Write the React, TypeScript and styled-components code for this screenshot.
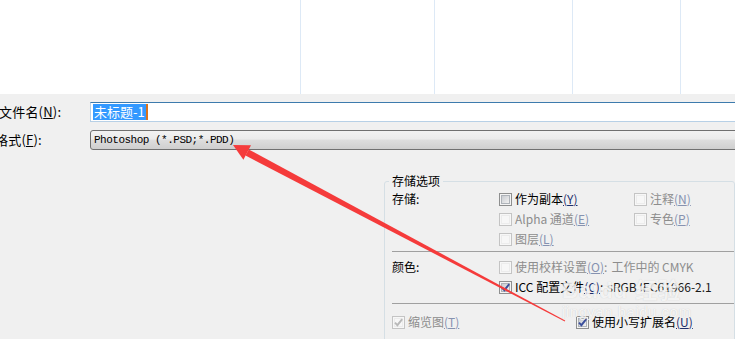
import React from "react";
import styled, { createGlobalStyle } from "styled-components";

const Global = createGlobalStyle`
  html, body { margin: 0; padding: 0; background: #f0f0f0; }
  body { font-family: "Noto Sans CJK SC", "Noto Sans", sans-serif; }
`;

const Screen = styled.div`
  position: relative;
  width: 735px;
  height: 339px;
  overflow: hidden;
  background: #f0f0f0;
`;

const FileList = styled.div`
  height: 94px;
  background: #ffffff;
  display: flex;
`;

const ListColumn = styled.div<{ $w?: number }>`
  flex: ${(p) => (p.$w ? `0 0 ${p.$w}px` : "1 1 auto")};
  box-sizing: border-box;
  border-right: ${(p) => (p.$w ? "1px solid #dde9f6" : "none")};
`;

const Form = styled.div`
  display: grid;
  grid-template-columns: 90px 1fr;
  grid-auto-rows: 20px;
  row-gap: 8px;
  align-items: center;
  padding-top: 8px;
  margin-right: -12px;
`;

const FieldLabel = styled.label<{ $shift: number }>`
  margin-left: ${(p) => p.$shift}px;
  font-size: 13px;
  line-height: 20px;
  color: #000;
  white-space: nowrap;
  letter-spacing: 0.2px;
`;

const Key = styled.span<{ $tone?: "dark" | "muted" | "plain" }>`
  text-decoration: underline;
  text-underline-offset: 1px;
  color: ${(p) =>
    p.$tone === "dark" ? "#1f2f6c" : p.$tone === "muted" ? "#8692b0" : "inherit"};
`;

const TextInput = styled.div`
  height: 20px;
  box-sizing: border-box;
  border: 1px solid #b7d0e6;
  border-top-color: #3d7bad;
  background: #fff;
  display: flex;
  align-items: center;
  padding-left: 2px;
`;

const Selected = styled.span`
  background: #3399ff;
  color: #fff;
  font-size: 13px;
  line-height: 16px;
  height: 16px;
  padding: 0 1px;
`;

const Caret = styled.span`
  width: 2px;
  height: 16px;
  background: #d8721c;
`;

const Combo = styled.div`
  height: 20px;
  box-sizing: border-box;
  border: 1px solid #707070;
  border-radius: 3px 0 0 3px;
  background: linear-gradient(#f2f2f2 0%, #ebebeb 45%, #dddddd 50%, #cfcfcf 100%);
  padding-left: 3px;
  font-family: "Liberation Mono", monospace;
  font-size: 11px;
  letter-spacing: -0.5px;
  line-height: 18px;
  color: #000;
  white-space: nowrap;
`;

const OptionsArea = styled.div`
  padding: 23px 0 0 384px;
`;

const GroupBox = styled.fieldset`
  margin: 0;
  width: 351px;
  box-sizing: border-box;
  min-width: 0;
  border: 1px solid #d5dfe5;
  border-radius: 3px;
  padding: 0 7px 40px 7px;
  height: 220px;
`;

const GroupTitle = styled.legend`
  padding: 0 3px;
  margin-left: -3px;
  font-size: 12px;
  line-height: 16px;
  color: #000;
`;

const Section = styled.div<{ $cols: string }>`
  display: grid;
  grid-template-columns: ${(p) => p.$cols};
  grid-auto-rows: 20px;
  align-items: center;
`;

const SectionLabel = styled.span<{ $rows?: number }>`
  grid-row: span ${(p) => p.$rows ?? 1};
  align-self: start;
  font-size: 12px;
  line-height: 20px;
  color: #000;
`;

const Separator = styled.div<{ $above: number; $below: number }>`
  height: 1px;
  background: #a0a0a0;
  margin: ${(p) => p.$above}px -7px ${(p) => p.$below}px 0;
`;

const Item = styled.span<{ $col?: number }>`
  grid-column: ${(p) => p.$col ?? "auto"};
  display: inline-flex;
  align-items: center;
  gap: 3px;
  white-space: nowrap;
`;

const ItemText = styled.span<{ $disabled?: boolean }>`
  font-size: 12px;
  line-height: 16px;
  color: ${(p) => (p.$disabled ? "#8d8d8d" : "#000")};
`;

const ValueText = styled.span<{ $disabled?: boolean }>`
  margin-left: 4px;
  color: ${(p) => (p.$disabled ? "#8d8d8d" : "#1a1a1a")};
`;

const Box = styled.span<{ $disabled?: boolean }>`
  position: relative;
  flex: none;
  width: 13px;
  height: 13px;
  box-sizing: border-box;
  border: 1px solid ${(p) => (p.$disabled ? "#c4c4c4" : "#8e8f8f")};
  background: ${(p) => (p.$disabled ? "#f7f7f7" : "#f4f4f4")};
  &::before {
    content: "";
    position: absolute;
    inset: 1px;
    border: 1px solid ${(p) => (p.$disabled ? "#ececec" : "#aeb3b9")};
    background: ${(p) =>
      p.$disabled ? "#f7f7f7" : "linear-gradient(135deg, #c9ccd1 0%, #f1f1f1 100%)"};
  }
  svg {
    position: absolute;
    left: -1px;
    top: -1px;
  }
`;

const Check = ({ color }: { color: string }) => (
  <svg width="13" height="13" viewBox="0 0 13 13">
    <path d="M3 6.6 L5.4 9.2 L10.2 3.2" fill="none" stroke={color} strokeWidth="1.9" />
  </svg>
);

type CheckProps = {
  label: React.ReactNode;
  mnemonic: string;
  disabled?: boolean;
  checked?: boolean;
  col?: number;
  value?: string;
  valueDisabled?: boolean;
};

const CheckItem = ({ label, mnemonic, disabled, checked, col, value, valueDisabled }: CheckProps) => (
  <Item $col={col}>
    <Box $disabled={disabled}>{checked && <Check color={disabled ? "#b9b9b9" : "#3b4f9c"} />}</Box>
    <ItemText $disabled={disabled}>
      {label}
      <Key $tone={disabled ? "muted" : "dark"}>({mnemonic})</Key>
      {value !== undefined && (
        <>
          :<ValueText $disabled={valueDisabled}>{value}</ValueText>
        </>
      )}
    </ItemText>
  </Item>
);

const Overlay = styled.svg`
  position: absolute;
  left: 0;
  top: 0;
  pointer-events: none;
`;

const Watermark = styled.div`
  position: absolute;
  left: 562px;
  top: 279px;
  display: flex;
  flex-direction: column;
  align-items: flex-start;
  color: rgba(255, 255, 255, 0.8);
  text-shadow: 0 0 1px rgba(120, 120, 120, 0.35);
  pointer-events: none;
`;

const WaterLogo = styled.span`
  font-family: "Liberation Sans", "Noto Sans CJK SC", sans-serif;
  font-weight: bold;
  font-size: 22px;
  line-height: 24px;
  letter-spacing: 1px;
`;

const WaterUrl = styled.span`
  font-family: "Liberation Sans", sans-serif;
  font-size: 15px;
  line-height: 18px;
  letter-spacing: 0.5px;
`;

export default function App() {
  return (
    <Screen>
      <Global />
      <FileList>
        <ListColumn $w={301} />
        <ListColumn $w={134} />
        <ListColumn $w={138} />
        <ListColumn $w={108} />
        <ListColumn />
      </FileList>

      <Form>
        <FieldLabel $shift={-1}>
          文件名(<Key>N</Key>):
        </FieldLabel>
        <TextInput>
          <Selected>未标题-1</Selected>
          <Caret />
        </TextInput>
        <FieldLabel $shift={-5}>
          格式(<Key>F</Key>):
        </FieldLabel>
        <Combo>Photoshop (*.PSD;*.PDD)</Combo>
      </Form>

      <OptionsArea>
        <GroupBox>
          <GroupTitle>存储选项</GroupTitle>
          <Section $cols="107px 135px 1fr">
            <SectionLabel $rows={3}>存储:</SectionLabel>
            <CheckItem col={2} label="作为副本" mnemonic="Y" />
            <CheckItem col={3} label="注释" mnemonic="N" disabled />
            <CheckItem col={2} label="Alpha 通道" mnemonic="E" disabled />
            <CheckItem col={3} label="专色" mnemonic="P" disabled />
            <CheckItem col={2} label="图层" mnemonic="L" disabled />
          </Section>
          <Separator $above={2} $below={5} />
          <Section $cols="107px 1fr">
            <SectionLabel $rows={2}>颜色:</SectionLabel>
            <CheckItem
              col={2}
              label="使用校样设置"
              mnemonic="O"
              disabled
              value="工作中的 CMYK"
              valueDisabled
            />
            <CheckItem
              col={2}
              label="ICC 配置文件"
              mnemonic="C"
              checked
              value="sRGB IEC61966-2.1"
            />
          </Section>
          <Separator $above={6} $below={8} />
          <Section $cols="184px 1fr">
            <CheckItem label="缩览图" mnemonic="T" disabled checked />
            <CheckItem label="使用小写扩展名" mnemonic="U" checked />
          </Section>
        </GroupBox>
      </OptionsArea>

      <Watermark>
        <WaterLogo>Baidu 经验</WaterLogo>
        <WaterUrl>jingyan.baidu.com</WaterUrl>
      </Watermark>

      <Overlay width="735" height="339" viewBox="0 0 735 339">
        <polygon points="248.7,149.4 245.5,155.6 564.8,321.4 565.2,320.6" fill="#f53b3b" />
        <polygon points="233,145 251,145.2 243.4,159.8" fill="#f53b3b" />
      </Overlay>
    </Screen>
  );
}
